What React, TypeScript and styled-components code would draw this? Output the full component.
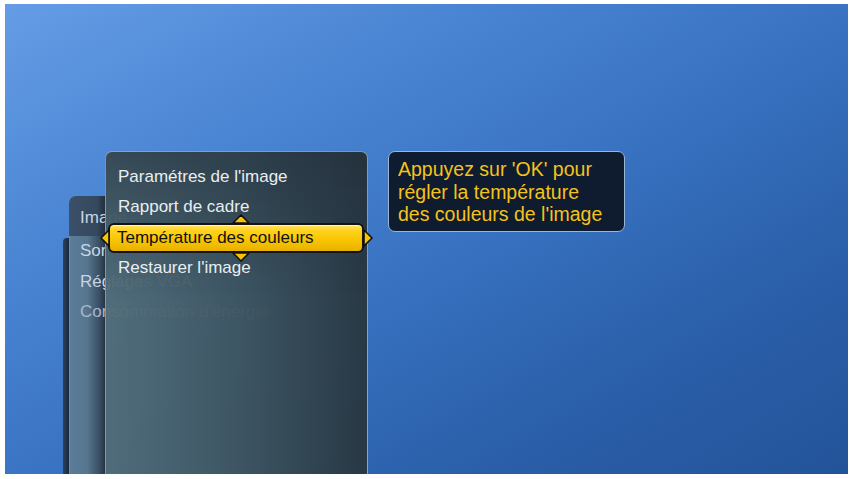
import styled, { createGlobalStyle } from 'styled-components';

const GlobalStyle = createGlobalStyle`
	html, body {
		margin: 0;
		padding: 0;
		background: #ffffff;
	}
	* {
		box-sizing: border-box;
	}
`;

const backItems = ['Image', 'Son', 'Réglages VGA', "Consommation d'énergie"];
const frontItems = [
	"Paramétres de l'image",
	'Rapport de cadre',
	'Température des couleurs',
	"Restaurer l'image",
];
const selected = 2;

const Arrow = ({ dir }: { dir: 'up' | 'down' | 'left' | 'right' }) => {
	const points = {
		up: '1,9 9,1 17,9',
		down: '1,1 9,9 17,1',
		left: '9,1 1,9 9,17',
		right: '1,1 9,9 1,17',
	}[dir];
	const vertical = dir === 'up' || dir === 'down';
	return (
		<ArrowMark $dir={dir}>
			<svg
				width={vertical ? 18 : 10}
				height={vertical ? 10 : 18}
				viewBox={vertical ? '0 0 18 10' : '0 0 10 18'}
			>
				<polygon
					points={points}
					fill='#f6c400'
					stroke='#111'
					strokeWidth='1.6'
					strokeLinejoin='round'
				/>
			</svg>
		</ArrowMark>
	);
};

const App = () => {
	return (
		<>
			<GlobalStyle />
			<Frame>
				<Screen>
					<MenuStack>
						<DeepEdge />
						<BackPanel>
							{backItems.map((item, i) => (
								<BackItem key={item} $active={i === 0} $faint={i === 3}>
									{item}
								</BackItem>
							))}
						</BackPanel>
						<FrontPanel>
							{frontItems.map((item, i) =>
								i === selected ? (
									<HighlightRow key={item}>
										<Highlight>{item}</Highlight>
										<Arrow dir='up' />
										<Arrow dir='down' />
										<Arrow dir='left' />
										<Arrow dir='right' />
									</HighlightRow>
								) : (
									<FrontItem key={item}>{item}</FrontItem>
								)
							)}
						</FrontPanel>
					</MenuStack>
					<Tooltip>
						Appuyez sur 'OK' pour
						<br />
						régler la température
						<br />
						des couleurs de l'image
					</Tooltip>
				</Screen>
			</Frame>
		</>
	);
};

export default App;

const Frame = styled.div`
	width: 853px;
	height: 479px;
	padding: 4px 5px 5px 5px;
	background: #ffffff;
	font-family: 'Liberation Sans', Arial, sans-serif;
`;

const Screen = styled.div`
	width: 100%;
	height: 100%;
	overflow: hidden;
	display: flex;
	align-items: flex-start;
	padding: 147px 0 0 57px;
	background: linear-gradient(
		150deg,
		#659ce5 0%,
		#4a85d3 28%,
		#3670be 55%,
		#2a5ea8 78%,
		#23549a 100%
	);
`;

const MenuStack = styled.div`
	position: relative;
	padding-left: 43px;
`;

const DeepEdge = styled.div`
	position: absolute;
	left: 1px;
	top: 87px;
	width: 6px;
	height: 400px;
	border-radius: 4px 0 0 0;
	background: linear-gradient(to right, #2c4260, #1a283c);
`;

const BackPanel = styled.div`
	position: absolute;
	left: 7px;
	top: 45px;
	width: 240px;
	height: 400px;
	border-radius: 7px 0 0 0;
	background: linear-gradient(
		to right,
		#5b7c9b 0px,
		#56768f 18px,
		#3a5064 30px,
		#263545 36px,
		transparent 36px
	);
	box-shadow: inset 1px 1px 0 #6f8cae;
`;

const BackItem = styled.div<{ $active?: boolean; $faint?: boolean }>`
	height: ${({ $active }) => ($active ? '40px' : '30.5px')};
	padding: ${({ $active }) => ($active ? '4px 0 0 11px' : '0 0 0 11px')};
	display: flex;
	align-items: center;
	font-size: 17px;
	white-space: nowrap;
	color: ${({ $faint }) => ($faint ? '#a8b8ca' : '#c9d5e2')};
	background: ${({ $active }) =>
		$active
			? 'linear-gradient(to right, #3b5069 0px, #34485e 28px, #222f3d 36px, transparent 36px)'
			: 'transparent'};
	border-radius: ${({ $active }) => ($active ? '7px 0 0 0' : '0')};
`;

const FrontPanel = styled.div`
	position: relative;
	width: 263px;
	height: 340px;
	padding-top: 9.5px;
	border: 1px solid rgba(160, 182, 198, 0.75);
	border-bottom: none;
	border-radius: 7px 7px 0 0;
	background:
		linear-gradient(to bottom, rgba(32, 44, 54, 0.55) 0px, rgba(32, 44, 54, 0) 150px),
		linear-gradient(to right, rgba(82, 108, 118, 0.93) 0%, rgba(62, 84, 94, 0.94) 50%, rgba(40, 54, 63, 0.95) 100%);
`;

const FrontItem = styled.div`
	height: 30.5px;
	padding-left: 12px;
	display: flex;
	align-items: center;
	font-size: 17px;
	color: #e9eef1;
	white-space: nowrap;
`;

const HighlightRow = styled.div`
	position: relative;
	height: 30.5px;
	margin: 0 3px 0 2px;
`;

const Highlight = styled.div`
	height: 100%;
	padding-left: 7px;
	display: flex;
	align-items: center;
	font-size: 17px;
	color: #111;
	white-space: nowrap;
	border: 2px solid #141414;
	border-radius: 6px;
	background: linear-gradient(to bottom, #ffe46a 0%, #ffd21c 22%, #f8c400 60%, #e8b000 100%);
	box-shadow: inset 0 1px 0 rgba(255, 250, 200, 0.8);
`;

const ArrowMark = styled.div<{ $dir: 'up' | 'down' | 'left' | 'right' }>`
	position: absolute;
	display: flex;
	line-height: 0;
	${({ $dir }) =>
		({
			up: 'left: 124px; top: -9px;',
			down: 'left: 124px; bottom: -9px;',
			left: 'left: -8px; top: 6px;',
			right: 'right: -9px; top: 6px;',
		})[$dir]}
`;

const Tooltip = styled.div`
	margin-left: 20px;
	width: 237px;
	padding: 6px 8px 5px 9px;
	font-size: 19.5px;
	line-height: 22.5px;
	color: #f3c31c;
	background: #0f1b2e;
	border: 1px solid #9cb5d4;
	border-radius: 7px;
	white-space: nowrap;
`;
